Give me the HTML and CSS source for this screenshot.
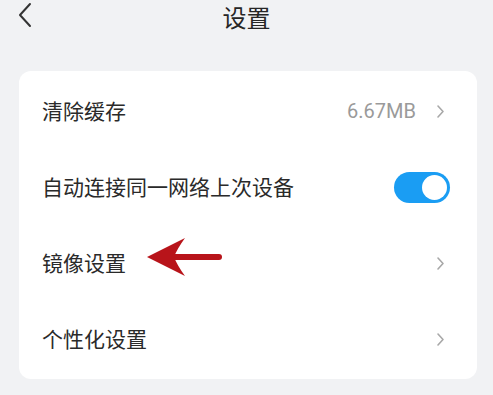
FILE: index.html
```html
<!DOCTYPE html>
<html lang="zh">
<head>
<meta charset="utf-8">
<title>设置</title>
<link rel="stylesheet" href="styles.css">
</head>
<body>
<div class="page">
  <header class="topbar">
    <svg class="back" width="16" height="26" viewBox="0 0 16 26"><path d="M13 2 L3 13 L13 24" fill="none" stroke="#333" stroke-width="2" stroke-linecap="round" stroke-linejoin="round"/></svg>
    <h1 class="title">设置</h1>
  </header>
  <section class="card">
    <div class="row">
      <span class="label">清除缓存</span>
      <span class="right"><span class="value">6.67MB</span><svg class="chev" width="9" height="15" viewBox="0 0 9 15"><path d="M2 2 L7 7.5 L2 13" fill="none" stroke="#a8a8a8" stroke-width="1.6" stroke-linecap="round" stroke-linejoin="round"/></svg></span>
    </div>
    <div class="row">
      <span class="label">自动连接同一网络上次设备</span>
      <span class="toggle"><span class="knob"></span></span>
    </div>
    <div class="row">
      <span class="label">镜像设置</span>
      <span class="right"><svg class="chev" width="9" height="15" viewBox="0 0 9 15"><path d="M2 2 L7 7.5 L2 13" fill="none" stroke="#a8a8a8" stroke-width="1.6" stroke-linecap="round" stroke-linejoin="round"/></svg></span>
    </div>
    <div class="row">
      <span class="label">个性化设置</span>
      <span class="right"><svg class="chev" width="9" height="15" viewBox="0 0 9 15"><path d="M2 2 L7 7.5 L2 13" fill="none" stroke="#a8a8a8" stroke-width="1.6" stroke-linecap="round" stroke-linejoin="round"/></svg></span>
    </div>
  </section>
  <svg class="arrow" width="90" height="55" viewBox="0 0 90 55">
    <path d="M30 27 L78 27" stroke="#b8141a" stroke-width="6" stroke-linecap="round"/>
    <path d="M6 27 L44 8 Q36 19 33 27 Q36 35 44 46 Z" fill="#b8141a"/>
  </svg>
</div>
</body>
</html>
```
FILE: styles.css
```css
html, body {
  margin: 0;
  padding: 0;
  background: #f1f2f4;
}
body {
  width: 493px;
  height: 395px;
  overflow: hidden;
  font-family: "Noto Sans CJK SC", "Noto Sans", sans-serif;
  color: #2b2b2b;
}
.page {
  position: relative;
  height: 395px;
}
.topbar {
  position: relative;
  height: 32px;
  display: flex;
  align-items: center;
  justify-content: center;
}
.back {
  position: absolute;
  left: 17px;
  top: 2px;
}
.title {
  margin: 2px 0 0;
  font-size: 24px;
  font-weight: 400;
  line-height: 26px;
  color: #262626;
}
.card {
  margin: 39px 16px 0 19px;
  background: #fff;
  border-radius: 12px;
  padding: 2px 0;
}
.row {
  height: 76px;
  display: flex;
  align-items: center;
  justify-content: space-between;
  padding: 0 32px 0 23px;
}
.label {
  font-size: 21px;
  line-height: 1.2;
  color: #2a2a2a;
}
.right {
  display: flex;
  align-items: center;
  gap: 20px;
}
.value {
  font-family: Roboto, "Noto Sans", sans-serif;
  font-size: 20px;
  color: #9a9a9a;
}
.chev {
  display: block;
}
.toggle {
  width: 56px;
  height: 31px;
  border-radius: 16px;
  background: #1a9df3;
  display: flex;
  align-items: center;
  justify-content: flex-end;
  padding: 0 3px;
  box-sizing: border-box;
  margin-right: -5px;
}
.knob {
  width: 25px;
  height: 25px;
  border-radius: 50%;
  background: #fff;
}
.arrow {
  position: absolute;
  left: 141px;
  top: 230px;
}
```
